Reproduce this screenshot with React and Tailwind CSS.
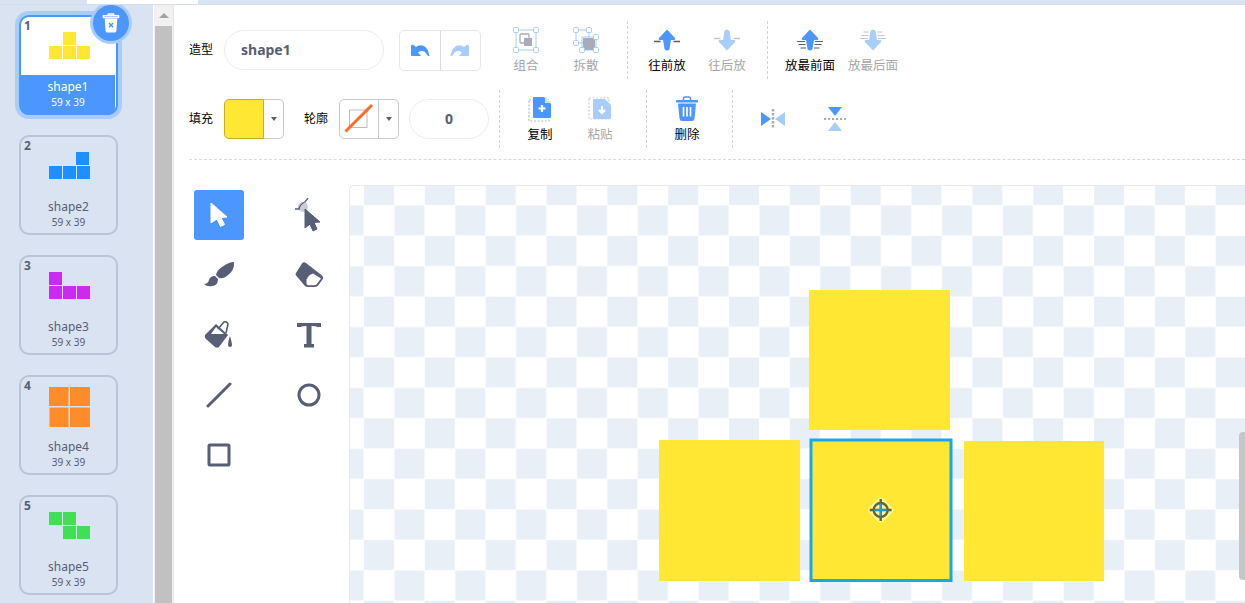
import React from 'react';

const FONT = "font-['Noto_Sans','Noto_Sans_CJK_SC',sans-serif]";

const SHAPES = [
  { n: 1, name: 'shape1', size: '59 x 39', color: '#ffe733', cells: [[14, 0], [0, 14], [14, 14], [28, 14]] },
  { n: 2, name: 'shape2', size: '59 x 39', color: '#1e8fff', cells: [[27, 0], [0, 14], [14, 14], [28, 14]] },
  { n: 3, name: 'shape3', size: '59 x 39', color: '#cc2af0', cells: [[0, 0], [0, 14], [14, 14], [28, 14]] },
  { n: 4, name: 'shape4', size: '39 x 39', color: '#ff8c2b', big: true },
  { n: 5, name: 'shape5', size: '59 x 39', color: '#40df56', cells: [[0, 0], [14, 0], [14, 14], [28, 14]] },
];

function Thumb({ shape }) {
  if (shape.big) {
    return (
      <svg width="41" height="40" className="block">
        <rect x="0" y="0" width="19.5" height="19" fill={shape.color} />
        <rect x="21" y="0" width="20" height="19" fill={shape.color} />
        <rect x="0.5" y="20.5" width="19" height="19.5" fill={shape.color} />
        <rect x="21" y="20.5" width="20" height="19.5" fill={shape.color} />
      </svg>
    );
  }
  return (
    <svg width="41" height="28" className="block">
      {shape.cells.map(([x, y], i) => (
        <rect key={i} x={x} y={y} width="13" height="13" fill={shape.color} />
      ))}
    </svg>
  );
}

function CostumeCard({ shape, selected }) {
  return (
    <div
      className={`relative w-[99px] h-[100px] rounded-[10px] shrink-0 ${
        selected
          ? 'bg-white border-2 border-[#4c97ff] shadow-[0_0_0_4px_#a9cdfb] overflow-visible'
          : 'border-2 border-[#b9c4d6]'
      }`}
    >
      <span className="absolute left-[3px] top-[1px] text-xs font-bold text-[#575e75]">{shape.n}</span>
      <div className={`flex justify-center h-[58px] pl-[1px] ${shape.big ? 'pt-[10px]' : 'pt-[15px]'}`}>
        <Thumb shape={shape} />
      </div>
      <div className={`flex flex-col items-center h-[40px] ${selected ? 'bg-[#4c97ff] text-white rounded-b-[7px] mr-[1px]' : 'text-[#575e75]'}`}>
        <span className="text-xs leading-[18px] mt-[3px]">{shape.name}</span>
        <span className="text-[10px] leading-[12px]">{shape.size}</span>
      </div>
      {selected && (
        <div className="absolute -right-[13px] -top-[12px] w-[36px] h-[36px] rounded-full bg-[#4c97ff] shadow-[0_0_0_3px_#a9cdfb] flex items-center justify-center">
          <svg width="18" height="22" viewBox="0 0 20 24">
            <path d="M7 3.5 V2 h6 v1.5 M1.5 4 h17 v2 h-17z" fill="none" stroke="#fff" strokeWidth="1.6" strokeLinejoin="round" />
            <path d="M3 7 h14 l-1 14 q-.1 1.5-1.6 1.5 h-8.8 q-1.5 0-1.6-1.5z" fill="#fff" />
            <path d="M7.7 12 l4.6 4.6 M12.3 12 l-4.6 4.6" stroke="#4c97ff" strokeWidth="1.6" />
          </svg>
        </div>
      )}
    </div>
  );
}

function Sidebar() {
  return (
    <aside className="w-[153px] shrink-0 bg-[#d9e3f2] flex flex-col items-start gap-[20px] pl-[19px] pt-[10px] overflow-hidden">
      {SHAPES.map((s, i) => (
        <CostumeCard key={s.n} shape={s} selected={i === 0} />
      ))}
    </aside>
  );
}

function Scrollbar() {
  return (
    <div className="w-[20px] shrink-0 bg-[#f1f1f1] flex flex-col items-center border-r border-[#e6e6e6] ml-[1px]">
      <div className="h-[21px] w-full flex items-center justify-center">
        <div className="w-0 h-0 border-l-[5px] border-r-[5px] border-b-[5px] border-l-transparent border-r-transparent border-b-[#a3a3a3]" />
      </div>
      <div className="w-[17px] flex-1 bg-[#c1c1c1]" />
    </div>
  );
}

const ArrowUp = ({ stack }) => (
  <svg width="26" height="22" viewBox="0 0 26 22">
    <path d="M13 0.500 L21 9 Q22 11 20 11 H17 L15.500 20 Q13 23 10.500 20 L9 11 H6 Q4 11 5 9z" fill="#4c97ff" />
    {stack ? (
      <path d="M0 12.500 H8 M1.500 15.500 H8.500 M3.500 19 H9 M18 12.500 H26 M17.500 15.500 H24.500 M17 19 H22.500" stroke="#575e75" strokeWidth="1.200" />
    ) : (
      <path d="M0 12.500 H6.500 M19.500 12.500 H26" stroke="#575e75" strokeWidth="1.400" />
    )}
  </svg>
);

const ArrowDown = ({ stack }) => (
  <svg width="26" height="22" viewBox="0 0 26 22">
    <path d="M13 21.500 L21 13 Q22 11 20 11 H17 L15.500 2 Q13 -1 10.500 2 L9 11 H6 Q4 11 5 13z" fill="#a9cdfb" />
    {stack ? (
      <path d="M3.500 3 H9 M1.500 6.500 H8.500 M0 9.500 H8 M17 3 H22.500 M17.500 6.500 H24.500 M18 9.500 H26" stroke="#c4c7d0" strokeWidth="1.200" />
    ) : (
      <path d="M0 9.500 H6.500 M19.500 9.500 H26" stroke="#c4c7d0" strokeWidth="1.400" />
    )}
  </svg>
);

const Handle = ({ x, y }) => <rect x={x - 2.5} y={y - 2.5} width="5" height="5" rx="1.200" fill="#fff" stroke="#a9cdfb" strokeWidth="1" />;

const GroupIcon = () => (
  <svg width="26" height="26" viewBox="0 0 26 26">
    <rect x="3" y="3" width="20" height="20" fill="none" stroke="#a9cdfb" />
    <Handle x={3} y={3} /><Handle x={23} y={3} /><Handle x={3} y={23} /><Handle x={23} y={23} />
    <rect x="7" y="7" width="9" height="9" rx="1" fill="none" stroke="#a9acb8" strokeWidth="1.300" />
    <rect x="11" y="11" width="8" height="8" fill="#a9acb8" />
  </svg>
);

const UngroupIcon = () => (
  <svg width="26" height="26" viewBox="0 0 26 26">
    <rect x="3" y="3" width="13" height="13" fill="none" stroke="#a9cdfb" />
    <rect x="9" y="10" width="14" height="13" fill="none" stroke="#a9cdfb" />
    <rect x="10" y="11" width="12" height="12" fill="#a9acb8" />
    <Handle x={3} y={3} /><Handle x={16} y={3} /><Handle x={3} y={16} /><Handle x={23} y={10} /><Handle x={9} y={23} /><Handle x={23} y={23} />
  </svg>
);

const CopyIcon = () => (
  <svg width="24" height="26" viewBox="0 0 24 26">
    <rect x="1" y="4" width="20" height="21" fill="none" stroke="#b5b8c4" strokeWidth="1.200" strokeDasharray="2 1.600" />
    <path d="M5 2 q0-1 1-1 h10 l7 7 v13 q0 1-1 1 H6 q-1 0-1-1z" fill="#4c97ff" />
    <path d="M17 1 l6 6 h-6z" fill="#fff" />
    <path d="M18 1.500 v4.500 h4.500" fill="none" stroke="#a9cdfb" />
    <path d="M14 9 v7 M10.500 12.500 h7" stroke="#fff" strokeWidth="2.200" />
  </svg>
);

const PasteIcon = () => (
  <svg width="24" height="26" viewBox="0 0 24 26">
    <rect x="1" y="2" width="20" height="21" fill="none" stroke="#c9ccd6" strokeWidth="1.200" strokeDasharray="2 1.600" />
    <path d="M5 4 q0-1 1-1 h11 l6 6 v13 q0 1-1 1 H6 q-1 0-1-1z" fill="#a9cdfb" />
    <path d="M14 10 v6 M11 14 l3 3 l3-3" fill="none" stroke="#fff" strokeWidth="2" />
  </svg>
);

const TrashIcon = () => (
  <svg width="24" height="26" viewBox="0 0 24 26">
    <path d="M8.500 4 V2.500 Q8.500 1 10 1 h4 q1.500 0 1.500 1.500 V4" fill="none" stroke="#4c97ff" strokeWidth="1.600" />
    <path d="M1.500 4 h21 q.8 0 .5 1.500 l-.5 1 H1.500 l-.5-1 Q.7 4 1.500 4z" fill="#4c97ff" />
    <path d="M3 7.500 h18 l-1.500 15 q-.2 2.500-2.700 2.500 H7.200 q-2.500 0-2.700-2.500z" fill="#4c97ff" />
    <path d="M8.500 11 v9.500 M12 11 v9.500 M15.500 11 v9.500" stroke="#fff" strokeWidth="1.700" />
  </svg>
);

const FlipH = () => (
  <svg width="26" height="22" viewBox="0 0 26 22">
    <path d="M1 4 L11 11 L1 18z" fill="#4c97ff" />
    <path d="M25 4 L15 11 L25 18z" fill="#a9cdfb" />
    <path d="M13 1 V21" stroke="#a9acb8" strokeWidth="2.400" strokeDasharray="2.400 1.600" />
  </svg>
);

const FlipV = () => (
  <svg width="24" height="26" viewBox="0 0 24 26">
    <path d="M5 1 H19 L12 10z" fill="#4c97ff" />
    <path d="M5 25 H19 L12 16z" fill="#a9cdfb" />
    <path d="M1 13 H23" stroke="#a9acb8" strokeWidth="2.200" strokeDasharray="2.200 1.800" />
  </svg>
);

const UNDO_PATH = 'M1 2 L1 11 Q1 12 2 12 H11 L8 8.500 Q12 6 15 8 L18 12 H19.500 Q18 4 14 2 Q9 0 6 3 L3.500 1 Q1.500 0 1 2z';

function ToolButton({ label, dim, icon }) {
  return (
    <div className="w-[60px] flex flex-col items-center shrink-0 pt-[5px]">
      <div className="h-[28px] flex items-center justify-center">{icon}</div>
      <span className={`text-[12.5px] leading-[16px] mt-[4px] whitespace-nowrap ${dim ? 'text-[#a6a6a6]' : 'text-black'}`}>{label}</span>
    </div>
  );
}

const Divider = () => <div className="w-0 h-[58px] border-l border-dashed border-[#d3d3d3] shrink-0" />;

const Caret = () => (
  <div className="w-0 h-0 border-l-[3px] border-r-[3px] border-t-[4px] border-l-transparent border-r-transparent border-t-[#575e75]" />
);

function Toolbar() {
  return (
    <div className="h-[154px] ml-[15px] border-b border-dashed border-[#d9d9d9] shrink-0 flex flex-col">
      {/* first row */}
      <div className="flex items-start h-[84px] pt-[15px]">
        <div className="flex items-center h-[58px]">
          <span className="text-xs text-black w-[35px]">造型</span>
          <div className="w-[160px] h-[40px] rounded-full border border-[#e9eef2] flex items-center pl-[16px] text-sm font-bold text-[#575e75]">shape1</div>
          <div className="ml-[15px] flex h-[41px] w-[82px] border border-[#e4e7ec] rounded-[5px]">
            <div className="flex-1 border-r border-[#d9d9d9] flex items-center justify-center">
              <svg width="20" height="13" viewBox="0 0 20 13"><path d={UNDO_PATH} fill="#4c97ff" /></svg>
            </div>
            <div className="flex-1 flex items-center justify-center">
              <svg width="20" height="13" viewBox="0 0 20 13" className="-scale-x-100"><path d={UNDO_PATH} fill="#a9cdfb" /></svg>
            </div>
          </div>
        </div>
        <div className="ml-[15px] flex">
          <ToolButton dim label="组合" icon={<GroupIcon />} />
          <ToolButton dim label="拆散" icon={<UngroupIcon />} />
        </div>
        <div className="ml-[11px]"><Divider /></div>
        <div className="ml-[9px] flex">
          <ToolButton label="往前放" icon={<ArrowUp />} />
          <ToolButton dim label="往后放" icon={<ArrowDown />} />
        </div>
        <div className="ml-[10px]"><Divider /></div>
        <div className="ml-[12px] flex gap-[3px]">
          <ToolButton label="放最前面" icon={<ArrowUp stack />} />
          <ToolButton dim label="放最后面" icon={<ArrowDown stack />} />
        </div>
      </div>
      {/* second row */}
      <div className="flex items-start h-[64px]">
        <div className="flex items-center h-[58px]">
          <span className="text-xs text-black w-[35px]">填充</span>
          <div className="w-[60px] h-[40px] flex">
            <div className="w-[40px] h-full bg-[#ffe733] border border-[#c9ad1c] rounded-l-[5px]" />
            <div className="flex-1 flex items-center justify-center border-y border-r border-[#c9c9c9] rounded-r-[5px]">
              <Caret />
            </div>
          </div>
          <span className="text-xs text-black ml-[20px] w-[35px]">轮廓</span>
          <div className="w-[60px] h-[40px] rounded-[5px] border border-[#c9c9c9] flex">
            <div className="w-[39px] h-full border-r border-[#c9c9c9] flex items-center justify-center">
              <svg width="30" height="30" viewBox="0 0 30 30">
                <rect x="5.500" y="6" width="17.500" height="17.500" fill="#fff" stroke="#bdbdbd" />
                <path d="M1.500 27.500 L28 1" stroke="#ff6a26" strokeWidth="3" />
              </svg>
            </div>
            <div className="flex-1 flex items-center justify-center">
              <Caret />
            </div>
          </div>
          <div className="ml-[10px] w-[80px] h-[40px] rounded-full border border-[#e9eef2] flex items-center justify-center text-sm font-bold text-[#575e75]">0</div>
        </div>
        <div className="ml-[10px]"><Divider /></div>
        <div className="ml-[10px] flex">
          <ToolButton label="复制" icon={<CopyIcon />} />
          <ToolButton dim label="粘贴" icon={<PasteIcon />} />
        </div>
        <div className="ml-[16px]"><Divider /></div>
        <div className="ml-[10px]">
          <ToolButton label="删除" icon={<TrashIcon />} />
        </div>
        <div className="ml-[15px]"><Divider /></div>
        <div className="ml-[27px] mt-[16px] flex items-center gap-[37px]">
          <FlipH />
          <FlipV />
        </div>
      </div>
    </div>
  );
}

const INK = '#575e75';
const TOOLS = [
  <svg key="sel" width="20" height="26" viewBox="0 0 20 26"><path d="M2 1 L18 15 L12 15.500 L15.500 22.500 L11.500 24.500 L8 17 L2 21z" fill="#fff" stroke="#fff" strokeLinejoin="round" /></svg>,
  <svg key="res" width="28" height="34" viewBox="0 0 28 34">
    <circle cx="8" cy="9" r="5" fill="#c9ccd6" />
    <path d="M0 11 H4 Q5 6 10 4 L13 0" fill="none" stroke={INK} strokeWidth="1.300" />
    <path d="M10 11 L25 24 L19 24.500 L22 31 L18 33 L15 26 L10 30z" fill={INK} stroke={INK} strokeLinejoin="round" />
  </svg>,
  <svg key="brush" width="32" height="28" viewBox="0 0 32 28">
    <path d="M31 1 Q32 9 24 15 Q20 18 16 17 L13 14 Q14 9 19 6 Q26 1 31 1z" fill={INK} />
    <path d="M12 15 L15 18 Q15 25 9 25 Q4 26 1 23 Q5 23 6 19 Q7 15 12 15z" fill={INK} />
  </svg>,
  <svg key="erase" width="29" height="26" viewBox="0 0 29 26">
    <path d="M7 1.500 Q8.500 -0.500 11 1 L27 13.500 Q29 15.500 27.500 17.500 L23.500 23 Q22 25 20 25 H13 Q11.500 25 10 24 L1.500 14 Q0 12.500 1 11z" fill={INK} />
    <path d="M11.500 17.500 Q14 12.500 18 11.500 L26 16.500 L21.500 22.500 Q20.500 23.300 19 23.300 H14 Q12.500 23.300 11.500 22z" fill="#fff" />
  </svg>,
  <svg key="fill" width="30" height="28" viewBox="0 0 30 28">
    <path d="M12 3 L24 14 L15 26 Q13 27 11 26 L2 18 Q0 16 1 14z" fill={INK} />
    <path d="M12 6 L20 13 L7 13z" fill="#fff" />
    <path d="M14 8 L20 1 Q23 0 24 3 L22 12" fill="none" stroke={INK} strokeWidth="1.600" />
    <path d="M26 15 Q28 22 28 24 A2 2 0 0 1 24 24 Q24 21 26 15z" fill={INK} />
  </svg>,
  <svg key="text" width="24" height="25" viewBox="0 0 24 25">
    <path d="M0 0 H24 V4 H20 Q19 3 14.500 3 V21 H17 V24.500 H7 V21 H9.500 V3 Q5 3 4 4 H0z" fill={INK} />
  </svg>,
  <svg key="line" width="26" height="26" viewBox="0 0 26 26"><path d="M2 24 L24 2" stroke={INK} strokeWidth="3" strokeLinecap="round" /></svg>,
  <svg key="circle" width="24" height="24" viewBox="0 0 24 24"><circle cx="12" cy="12" r="10" fill="none" stroke={INK} strokeWidth="3" /></svg>,
  <svg key="rect" width="24" height="24" viewBox="0 0 24 24"><rect x="2" y="2" width="20" height="20" rx="1" fill="none" stroke={INK} strokeWidth="3" /></svg>,
];

function ToolGrid() {
  return (
    <div className="grid grid-cols-[repeat(2,50px)] gap-x-[40px] gap-y-[10px] content-start pt-[30px] pl-[20px] w-[175px] shrink-0">
      {TOOLS.map((icon, i) => (
        <div key={i} className={`w-[50px] h-[50px] flex items-center justify-center rounded-[3px] ${i === 0 ? 'bg-[#4c97ff]' : ''}`}>
          {icon}
        </div>
      ))}
    </div>
  );
}

function Canvas() {
  const Y = '#ffe733';
  return (
    <div className="relative flex-1 min-w-0 mt-[25px] border-t border-l border-[#e8e8e8] rounded-tl-[5px] overflow-hidden">
      <svg width="900" height="420" className="block">
        <defs>
          <pattern id="checker" x="14" y="-11" width="60.84" height="60.84" patternUnits="userSpaceOnUse">
            <rect x="0" y="0" width="30" height="30" fill="#e9eff7" />
            <rect x="30.42" y="30.42" width="30" height="30" fill="#e9eff7" />
          </pattern>
        </defs>
        <rect width="900" height="420" fill="url(#checker)" />
        <rect x="459" y="104" width="141" height="140" fill={Y} />
        <rect x="309" y="254" width="141" height="141" fill={Y} />
        <rect x="614" y="255" width="140" height="140" fill={Y} />
        <rect x="461" y="254" width="140" height="140.500" fill={Y} stroke="#1aa7e8" strokeWidth="3" />
        <g transform="translate(530.700 324)">
          <rect x="-10" y="-10" width="20" height="20" rx="4" transform="rotate(45)" fill="#fff" fillOpacity="0.55" />
          <circle r="7" fill="none" stroke="#6b6624" strokeWidth="2.400" />
          <path d="M-11 0 H11 M0 -11 V11" stroke="#6b6624" strokeWidth="2.400" />
          <path d="M-6.500 0 H6.500 M0 -6.500 V6.500" stroke="#1aa7e8" strokeWidth="1.300" />
        </g>
      </svg>
      <div className="absolute right-0 top-[246px] w-[6px] h-[148px] bg-[#c6c6c6] rounded-l-[4px]" />
    </div>
  );
}

export default function App() {
  return (
    <div className={`${FONT} w-[1245px] h-[603px] overflow-hidden flex flex-col bg-white`}>
      {/* strip of the host page above */}
      <div className="h-[5px] shrink-0 flex border-b border-[#d6dde8]">
        <div className="w-[87px] bg-[#d9e3f2]" />
        <div className="w-[111px] bg-white" />
        <div className="flex-1 bg-[#d9e3f2]" />
      </div>
      <div className="flex-1 flex min-h-0">
        <Sidebar />
        <Scrollbar />
        <main className="flex-1 min-w-0 flex flex-col pt-[1px]">
          <Toolbar />
          <div className="flex-1 flex min-h-0">
            <ToolGrid />
            <Canvas />
          </div>
        </main>
      </div>
    </div>
  );
}
